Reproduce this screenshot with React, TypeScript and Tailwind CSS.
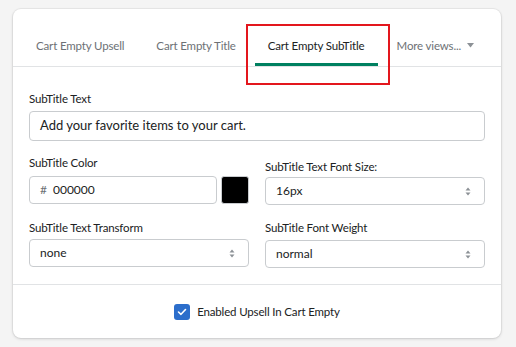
import React from "react";

const TABS = [
  { label: "Cart Empty Upsell", active: false },
  { label: "Cart Empty Title", active: false },
  { label: "Cart Empty SubTitle", active: true },
];

function UpDown() {
  return (
    <svg width="8" height="11" viewBox="0 0 8 11" className="text-[#8c9196]">
      <path d="M4 1.5 L6.5 4.5 H1.5 Z" fill="currentColor" />
      <path d="M4 9.5 L6.5 6.5 H1.5 Z" fill="currentColor" />
    </svg>
  );
}

function Select({ value }: { value: string }) {
  return (
    <div className="flex h-[28px] items-center justify-between rounded-[4px] border border-[#c9cccf] bg-white pl-[10px] pr-[12px] text-[12px] text-[#202223]">
      <span>{value}</span>
      <UpDown />
    </div>
  );
}

function Label({ children }: { children: React.ReactNode }) {
  return (
    <div className="h-4 text-[11.5px] leading-4 tracking-[-0.15px] text-[#202223]">{children}</div>
  );
}

export default function App() {
  return (
    <div
      className="h-[347px] w-[516px] bg-[#f4f4f4] pl-[13px] pt-[9px]"
      style={{ fontFamily: 'Lato, "Noto Sans", sans-serif' }}
    >
      <div className="relative h-[329px] w-[488px] rounded-[8px] bg-white shadow-[0_0_0_1px_rgba(63,63,68,0.06),0_1px_3px_rgba(63,63,68,0.2)]">
        {/* tabs */}
        <div className="flex h-[58px] items-end gap-[6px] whitespace-nowrap border-b border-[#e1e3e5] pl-[10px]">
          {TABS.map((t) => (
            <div
              key={t.label}
              className={
                "flex h-full shrink-0 items-center border-b-[3px] px-[13px] pt-[19px] text-[11.5px] tracking-[-0.15px] " +
                (t.active ? "border-[#008060] text-[#202223]" : "border-transparent text-[#6d7175]")
              }
            >
              {t.label}
            </div>
          ))}
          <div className="flex h-full shrink-0 items-center gap-[6px] border-b-[3px] border-transparent px-[13px] pt-[19px] text-[11.5px] tracking-[-0.15px] text-[#6d7175]">
            More views...
            <svg width="7" height="5" viewBox="0 0 7 5">
              <path d="M0 0 H7 L3.5 4.5 Z" fill="#8c9196" />
            </svg>
          </div>
        </div>

        {/* annotation */}
        <div className="absolute left-[233px] top-[15px] h-[61px] w-[144px] border-2 border-[#e3161d]" />

        {/* fields */}
        <div className="px-4 pb-4 pt-6">
          <Label>SubTitle Text</Label>
          <div className="mt-1 flex h-[30px] items-center rounded-[4px] border border-[#c9cccf] px-[10px] text-[13px] text-[#202223]">
            Add your favorite items to your cart.
          </div>

          <div className="mt-[14px] grid grid-cols-2 gap-x-4">
            <div>
              <Label>SubTitle Color</Label>
              <div className="mt-[5px] flex gap-1">
                <div className="flex h-[28px] flex-1 items-center gap-[6px] rounded-[4px] border border-[#c9cccf] px-[10px] text-[12px] text-[#202223]">
                  <span className="text-[#6d7175]">#</span>
                  <span>000000</span>
                </div>
                <div className="h-[28px] w-[28px] rounded-[3px] border border-[#c9cccf] bg-black" />
              </div>
            </div>
            <div className="pt-1">
              <Label>SubTitle Text Font Size:</Label>
              <div className="mt-[2px]">
                <Select value="16px" />
              </div>
            </div>
          </div>

          <div className="mt-[15px] grid grid-cols-2 gap-x-4">
            <div>
              <Label>SubTitle Text Transform</Label>
              <div className="mt-[3px]">
                <Select value="none" />
              </div>
            </div>
            <div>
              <Label>SubTitle Font Weight</Label>
              <div className="mt-[4px]">
                <Select value="normal" />
              </div>
            </div>
          </div>
        </div>

        {/* footer */}
        <div className="flex h-[54px] items-center justify-center gap-[7px] border-t border-[#e1e3e5]">
          <div className="flex h-4 w-4 items-center justify-center rounded-[3px] bg-[#2c6ecb]">
            <svg width="10" height="8" viewBox="0 0 10 8">
              <path d="M1.5 4 L4 6.3 L8.5 1.5" fill="none" stroke="white" strokeWidth="1.6" strokeLinecap="round" strokeLinejoin="round" />
            </svg>
          </div>
          <span className="text-[11.5px] tracking-[-0.15px] text-[#202223]">Enabled Upsell In Cart Empty</span>
        </div>
      </div>
    </div>
  );
}
